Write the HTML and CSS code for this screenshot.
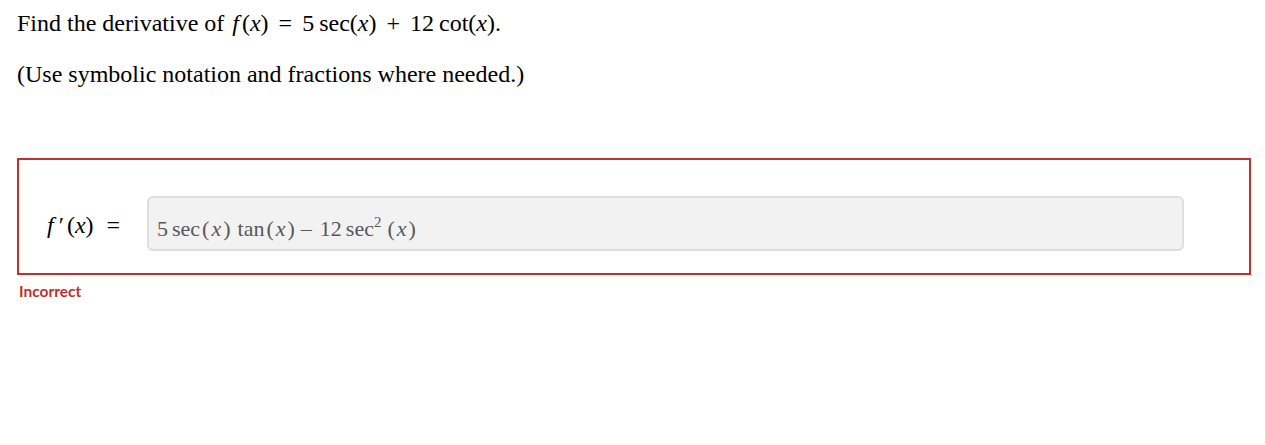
FILE: index.html
```html
<!DOCTYPE html>
<html lang="en">
<head>
    <meta charset="UTF-8">
    <meta name="viewport" content="width=device-width, initial-scale=1.0">
    <title>Derivative question</title>
    <link rel="stylesheet" href="styles.css">
</head>
<body>
    <div class="page">
        <p class="prompt">Find the derivative of <span class="math"><i>f</i>(<i>x</i>)<span class="rel">=</span>5<span class="fn">sec</span>(<i>x</i>)<span class="bin">+</span>12<span class="fn">cot</span>(<i>x</i>).</span></p>
        <p class="prompt hint">(Use symbolic notation and fractions where needed.)</p>

        <div class="answer-box">
            <div class="answer-row">
                <div class="label"><i>f</i><span class="prime">′</span>(<i>x</i>)<span class="rel">=</span></div>
                <div class="answer-input">
                    <span class="num">5</span><span class="fn">sec</span><span class="pr">(</span><i class="v">x</i><span class="pr">)</span><span class="fn sp">tan</span><span class="pr">(</span><i class="v">x</i><span class="pr">)</span><span class="minus">&#8211;</span><span class="num">12</span><span class="fn">sec<sup>2</sup></span><span class="pr sp">(</span><i class="v">x</i><span class="pr">)</span>
                </div>
            </div>
        </div>
        <p class="feedback">Incorrect</p>
    </div>
</body>
</html>
```

FILE: styles.css
```css
/* page */
body {
    margin: 0;
    padding: 0;
    background: #fff;
    color: #000;
    font-family: "Liberation Serif", "Times New Roman", serif;
}

.page {
    box-sizing: border-box;
    width: 1266px;
    min-height: 100vh;
    padding: 9px 14px 0 17px;
    border-right: 1px solid #dcdcdc;
}

.prompt {
    margin: 0;
    font-size: 24px;
    line-height: 28px;
}

.hint {
    margin-top: 23px;
}

/* inline math */
.math {
    margin-left: 2px;
}

.math i:first-child {
    margin-right: 3px;
}

.math .fn {
    margin-left: 5px;
}

.rel {
    margin: 0 10px;
}

.bin {
    margin: 0 10px;
}

/* answer */
.answer-box {
    margin-top: 70px;
    border: 2px solid #c0302e;
    padding: 36px 65px 22px 28px;
}

.answer-row {
    display: flex;
    align-items: baseline;
}

.label {
    width: 100px;
    flex-shrink: 0;
    font-size: 24px;
    position: relative;
    top: -3px;
}

.label .prime {
    margin: 0 3px 0 5px;
}

.label .rel {
    margin: 0 0 0 13px;
}

.answer-input {
    flex: 1;
    height: 55px;
    box-sizing: border-box;
    background: #f2f2f2;
    border: 2px solid #dedede;
    border-radius: 6px;
    padding: 18px 8px 0;
    font-size: 22px;
    color: #585858;
    line-height: 26px;
    white-space: nowrap;
}

.answer-input .num {
    margin-right: 4px;
}

.answer-input .fn {
    margin-right: 2px;
}

.answer-input .fn.sp {
    margin-left: 7px;
}

.answer-input .pr.sp {
    margin-left: 4px;
}

.answer-input .v {
    margin: 0 2px;
}

.minus {
    margin: 0 8px 0 6px;
}

.answer-input sup {
    font-size: 15px;
    vertical-align: 9px;
    line-height: 0;
}

.feedback {
    margin: 7px 0 0 2px;
    font-family: Lato, "Open Sans", sans-serif;
    font-weight: 700;
    font-size: 15.5px;
    color: #c0302e;
}
```
